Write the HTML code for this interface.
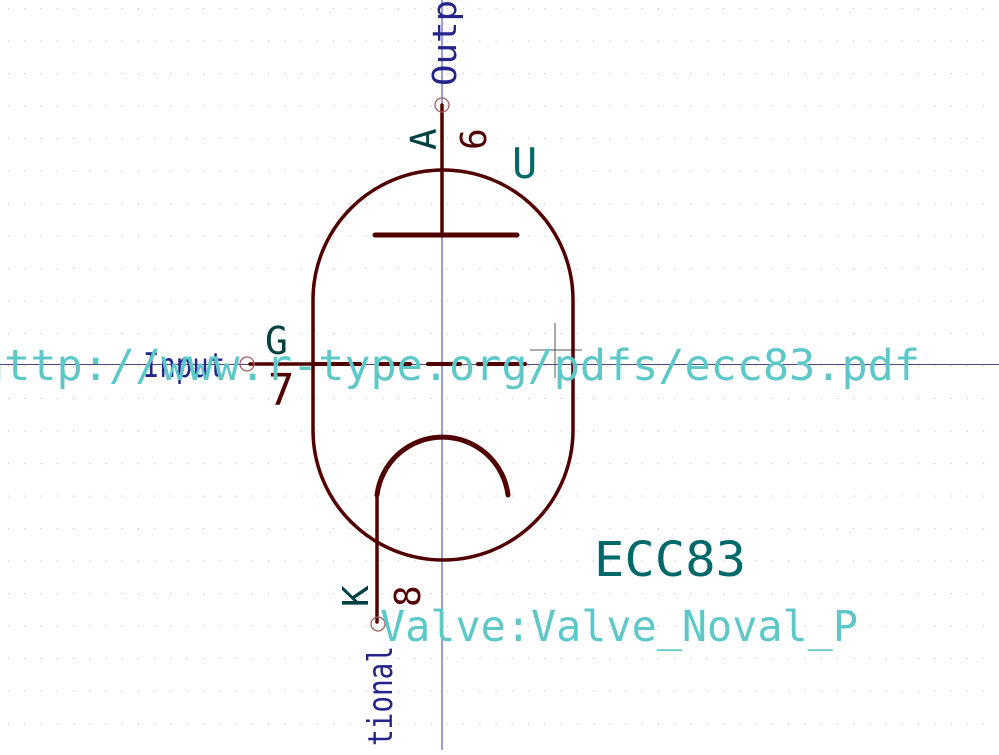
<!DOCTYPE html>
<html><head><meta charset="utf-8"><style>html,body{margin:0;padding:0;background:#fff;overflow:hidden}</style></head>
<body>
<svg width="999" height="750" viewBox="0 0 999 750" xmlns="http://www.w3.org/2000/svg" font-family="DejaVu Sans Mono, Liberation Mono, monospace">
<defs>
<pattern id="g" x="8" y="8" width="16.25" height="32.5" patternUnits="userSpaceOnUse">
<rect x="0" y="0" width="1.2" height="1.2" fill="#c8c8c8"/>
</pattern>
</defs>
<rect width="999" height="750" fill="#fff"/>
<rect width="999" height="750" fill="url(#g)"/>
<line x1="442" y1="0" x2="442" y2="750" stroke="#3a3ab8" stroke-width="1"/>
<line x1="0" y1="364.5" x2="999" y2="364.5" stroke="#4a4a80" stroke-width="1"/>
<line x1="530" y1="350" x2="582" y2="350" stroke="#555" stroke-width="1"/>
<line x1="555" y1="323" x2="555" y2="378" stroke="#555" stroke-width="1"/>
<g stroke="#500000" fill="none" stroke-linecap="round">
<path d="M313 300 A130 130 0 0 1 573 300 L573 430 A130 130 0 0 1 313 430 Z" stroke-width="3.5"/>
<line x1="442" y1="105" x2="442" y2="236" stroke-width="3.5"/>
<line x1="375" y1="235" x2="517" y2="235" stroke-width="5"/>
<line x1="250" y1="364" x2="313" y2="364" stroke-width="3.5"/>
<path d="M313 364 H360 M380 364 H410 M428 364 H460 M478 364 H525" stroke-width="4"/>
<path d="M377 495 A66 66 0 0 1 508 495" stroke-width="5"/>
<line x1="377" y1="495" x2="377" y2="622" stroke-width="3.5"/>
</g>
<g fill="none" stroke="#a06060" stroke-width="1.3">
<circle cx="442" cy="105" r="7"/>
<circle cx="247" cy="364" r="7"/>
<circle cx="378" cy="624" r="7"/>
</g>
<text transform="translate(456,86) rotate(-90)" font-size="33" fill="#24248a" textLength="86" lengthAdjust="spacingAndGlyphs">Outp</text>
<text transform="translate(436,150) rotate(-90)" font-size="36" fill="#004040">A</text>
<text transform="translate(486,150) rotate(-90)" font-size="36" fill="#500000">6</text>
<text x="512" y="178" font-size="42" fill="#006868">U</text>
<text x="265" y="354" font-size="38" fill="#004040">G</text>
<text x="268" y="405" font-size="44" fill="#500000">7</text>
<text x="143" y="377" font-size="34" fill="#24248a" textLength="82" lengthAdjust="spacingAndGlyphs">Input</text>
<text transform="translate(368,607) rotate(-90)" font-size="36" fill="#004040">K</text>
<text transform="translate(420,607) rotate(-90)" font-size="36" fill="#500000">8</text>
<text transform="translate(392,746) rotate(-90)" font-size="34" fill="#24248a" textLength="100" lengthAdjust="spacingAndGlyphs">tional</text>
<text x="-22" y="380" font-size="43" fill="#5ec8c8" textLength="942" lengthAdjust="spacingAndGlyphs">http://www.r-type.org/pdfs/ecc83.pdf</text>
<text x="594" y="576" font-size="48" fill="#006868" textLength="152" lengthAdjust="spacingAndGlyphs">ECC83</text>
<text x="380" y="641" font-size="43" fill="#5ec8c8" textLength="478" lengthAdjust="spacingAndGlyphs">Valve:Valve_Noval_P</text>
</svg>
</body></html>
